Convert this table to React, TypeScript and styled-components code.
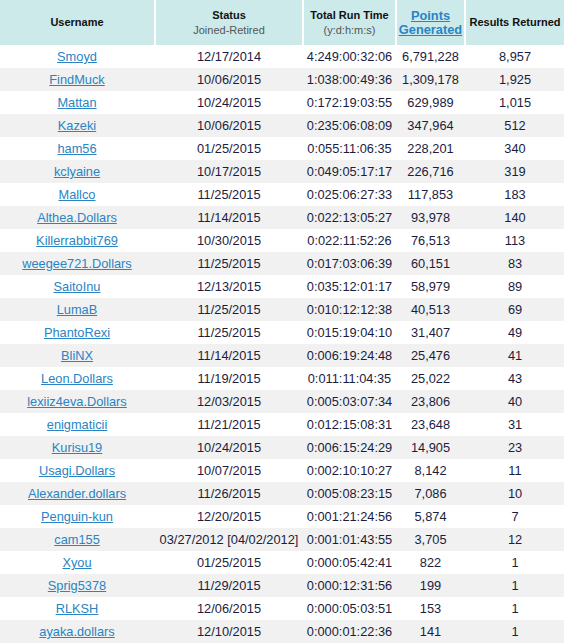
import React from "react";
import styled, { createGlobalStyle } from "styled-components";

const Global = createGlobalStyle`
  html, body { margin: 0; padding: 0; background: #ffffff; }
  body { font-family: "Liberation Sans", Arial, sans-serif; }
`;

const COLS = "154px 148px 93px 69px 100px";

const Table = styled.div`
  width: 564px;
  display: flex;
  flex-direction: column;
`;

const HeaderRow = styled.div`
  display: grid;
  grid-template-columns: ${COLS};
  height: 45px;
`;

const HeadCell = styled.div<{ $first?: boolean }>`
  background: #cceaea;
  border-left: ${(p) => (p.$first ? "0" : "2px solid #ffffff")};
  display: flex;
  flex-direction: column;
  align-items: center;
  justify-content: center;
  text-align: center;
  color: #111111;
  font-size: 11px;
  font-weight: bold;
  line-height: 15px;
`;

const SubLabel = styled.span`
  font-weight: normal;
  color: #555555;
  font-size: 11px;
`;

const HeadLink = styled.a`
  color: #2a84c4;
  font-size: 12.8px;
  font-weight: bold;
  line-height: 14px;
  text-decoration: underline;
  cursor: pointer;
`;

const Row = styled.div<{ $alt: boolean }>`
  display: grid;
  grid-template-columns: ${COLS};
  height: 23px;
  background: ${(p) => (p.$alt ? "#f0f1f0" : "#ffffff")};
`;

const Cell = styled.div<{ $first?: boolean }>`
  border-left: ${(p) => (p.$first ? "0" : "2px solid transparent")};
  display: flex;
  align-items: center;
  justify-content: center;
  white-space: nowrap;
  font-size: 12.8px;
  color: #1c1c3e;
`;

const UserLink = styled.a`
  color: #2a84c4;
  text-decoration: underline;
  cursor: pointer;
`;

type Rec = [string, string, string, string, string];

const data: Rec[] = [
  ["Smoyd", "12/17/2014", "4:249:00:32:06", "6,791,228", "8,957"],
  ["FindMuck", "10/06/2015", "1:038:00:49:36", "1,309,178", "1,925"],
  ["Mattan", "10/24/2015", "0:172:19:03:55", "629,989", "1,015"],
  ["Kazeki", "10/06/2015", "0:235:06:08:09", "347,964", "512"],
  ["ham56", "01/25/2015", "0:055:11:06:35", "228,201", "340"],
  ["kclyaine", "10/17/2015", "0:049:05:17:17", "226,716", "319"],
  ["Mallco", "11/25/2015", "0:025:06:27:33", "117,853", "183"],
  ["Althea.Dollars", "11/14/2015", "0:022:13:05:27", "93,978", "140"],
  ["Killerrabbit769", "10/30/2015", "0:022:11:52:26", "76,513", "113"],
  ["weegee721.Dollars", "11/25/2015", "0:017:03:06:39", "60,151", "83"],
  ["SaitoInu", "12/13/2015", "0:035:12:01:17", "58,979", "89"],
  ["LumaB", "11/25/2015", "0:010:12:12:38", "40,513", "69"],
  ["PhantoRexi", "11/25/2015", "0:015:19:04:10", "31,407", "49"],
  ["BliNX", "11/14/2015", "0:006:19:24:48", "25,476", "41"],
  ["Leon.Dollars", "11/19/2015", "0:011:11:04:35", "25,022", "43"],
  ["lexiiz4eva.Dollars", "12/03/2015", "0:005:03:07:34", "23,806", "40"],
  ["enigmaticii", "11/21/2015", "0:012:15:08:31", "23,648", "31"],
  ["Kurisu19", "10/24/2015", "0:006:15:24:29", "14,905", "23"],
  ["Usagi.Dollars", "10/07/2015", "0:002:10:10:27", "8,142", "11"],
  ["Alexander.dollars", "11/26/2015", "0:005:08:23:15", "7,086", "10"],
  ["Penguin-kun", "12/20/2015", "0:001:21:24:56", "5,874", "7"],
  ["cam155", "03/27/2012 [04/02/2012]", "0:001:01:43:55", "3,705", "12"],
  ["Xyou", "01/25/2015", "0:000:05:42:41", "822", "1"],
  ["Sprig5378", "11/29/2015", "0:000:12:31:56", "199", "1"],
  ["RLKSH", "12/06/2015", "0:000:05:03:51", "153", "1"],
  ["ayaka.dollars", "12/10/2015", "0:000:01:22:36", "141", "1"],
];

export default function App() {
  return (
    <>
      <Global />
      <Table>
        <HeaderRow>
          <HeadCell $first>Username</HeadCell>
          <HeadCell>
            Status
            <SubLabel>Joined-Retired</SubLabel>
          </HeadCell>
          <HeadCell>
            Total Run Time
            <SubLabel>(y:d:h:m:s)</SubLabel>
          </HeadCell>
          <HeadCell>
            <HeadLink>Points</HeadLink>
            <HeadLink>Generated</HeadLink>
          </HeadCell>
          <HeadCell>Results Returned</HeadCell>
        </HeaderRow>
        {data.map((r, i) => (
          <Row key={r[0]} $alt={i % 2 === 1}>
            <Cell $first>
              <UserLink>{r[0]}</UserLink>
            </Cell>
            <Cell>{r[1]}</Cell>
            <Cell>{r[2]}</Cell>
            <Cell>{r[3]}</Cell>
            <Cell>{r[4]}</Cell>
          </Row>
        ))}
      </Table>
    </>
  );
}
